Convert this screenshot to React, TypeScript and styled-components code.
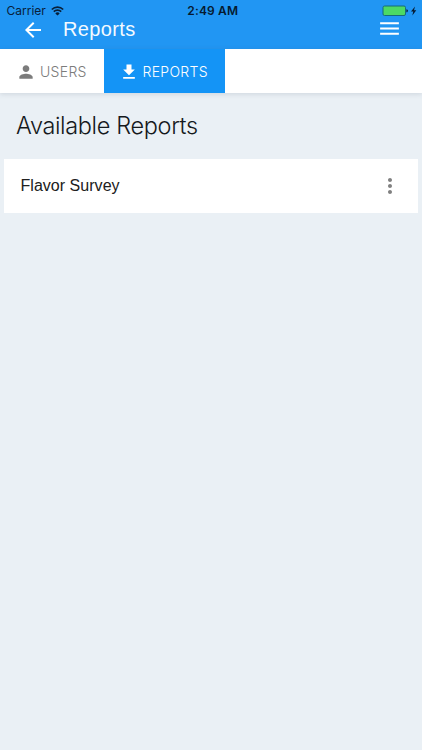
import React from "react";
import styled, { createGlobalStyle } from "styled-components";

const GlobalStyle = createGlobalStyle`
  * { box-sizing: border-box; }
  body { margin: 0; background: #eaf0f5; font-family: "Liberation Sans", Arial, sans-serif; }
`;

const Screen = styled.div`
  width: 100%;
  min-height: 100vh;
  background: #eaf0f5;
  overflow: hidden;
`;

const Header = styled.header`
  height: 49px;
  background: #2196f3;
`;

const StatusBar = styled.div`
  height: 18px;
  padding: 4px 5px 0 6.5px;
  display: grid;
  grid-template-columns: 1fr auto 1fr;
  font: 500 12px/14px Inter, sans-serif;
  color: #08203a;
`;

const StatusGroup = styled.div<{ $end?: boolean }>`
  display: flex;
  align-items: center;
  gap: 5px;
  letter-spacing: 0;
  font-weight: 400;
  justify-content: ${(p) => (p.$end ? "flex-end" : "flex-start")};
`;

const Clock = styled.div`
  font-weight: 600;
  letter-spacing: 0.15px;
  color: #061a30;
  margin-left: 2px;
`;

const Toolbar = styled.div`
  display: flex;
  align-items: center;
  height: 24px;
  padding: 0 20px 0 21px;
`;

const IconButton = styled.button<{ $color: string }>`
  display: flex;
  padding: 0;
  border: 0;
  background: none;
  color: ${(p) => p.$color};
`;

const MenuButton = styled(IconButton)`
  margin-bottom: 3px;
`;

const Title = styled.h1`
  flex: 1;
  margin: -2px 0 0 18px;
  font-size: 20px;
  line-height: 24px;
  font-weight: 400;
  letter-spacing: 0.35px;
  color: #f4faff;
`;

const Tabs = styled.nav`
  display: flex;
  height: 44px;
  background: #fff;
  box-shadow: 0 1px 5px rgba(70, 90, 110, 0.18);
`;

const Tab = styled.button<{ $active?: boolean; $width: number }>`
  display: flex;
  align-items: center;
  gap: 4px;
  width: ${(p) => p.$width}px;
  padding: 1px 0 0 ${(p) => (p.$active ? 15 : 16)}px;
  border: 0;
  background: ${(p) => (p.$active ? "#1494f6" : "#fff")};
  color: ${(p) => (p.$active ? "#fff" : "#7c7c7c")};
`;

const TabLabel = styled.span<{ $spacing: number }>`
  font: 300 14px/20px Inter, sans-serif;
  letter-spacing: ${(p) => p.$spacing}px;
  white-space: nowrap;
`;

const Heading = styled.h2`
  margin: 0;
  height: 65.5px;
  padding-left: 16px;
  font: 300 23.5px/66px Inter, sans-serif;
  letter-spacing: -0.35px;
  color: #15191c;
  white-space: nowrap;
`;

const Card = styled.section`
  display: flex;
  align-items: center;
  justify-content: space-between;
  height: 54px;
  margin: 0 4px;
  padding: 0 16px 0 16.5px;
  background: #fff;
`;

const ReportName = styled.span`
  font-size: 16px;
  letter-spacing: 0.03px;
  color: #202020;
`;

const Icon = ({ d, size = 24 }: { d: string; size?: number }) => (
  <svg width={size} height={size} viewBox="0 0 24 24" fill="currentColor" aria-hidden="true">
    <path d={d} />
  </svg>
);

const icons = {
  back: "M20 11H7.83l5.59-5.59L12 4l-8 8 8 8 1.41-1.41L7.83 13H20v-2z",
  menu: "M3 18h18v-2H3v2zm0-5h18v-2H3v2zm0-7v2h18V6H3z",
  person: "M12 12c2.21 0 4-1.79 4-4s-1.79-4-4-4-4 1.79-4 4 1.79 4 4 4zm0 2c-2.67 0-8 1.34-8 4v2h16v-2c0-2.66-5.33-4-8-4z",
  download: "M19 9h-4V3H9v6H5l7 7 7-7zM5 18v2h14v-2H5z",
  more: "M12 8c1.1 0 2-.9 2-2s-.9-2-2-2-2 .9-2 2 .9 2 2 2zm0 2c-1.1 0-2 .9-2 2s.9 2 2 2 2-.9 2-2-.9-2-2-2zm0 6c-1.1 0-2 .9-2 2s.9 2 2 2 2-.9 2-2-.9-2-2-2z",
};

const Wifi = () => (
  <svg width="13" height="10" viewBox="0 0 13 10" fill="none" stroke="currentColor" strokeWidth="1.7">
    <path d="M.8 3.5a8.1 8.1 0 0 1 11.4 0M2.8 5.6a5.2 5.2 0 0 1 7.4 0" />
    <path d="M6.5 9.6 4.3 7.4a3.1 3.1 0 0 1 4.4 0z" fill="currentColor" stroke="none" />
  </svg>
);

const Battery = () => (
  <svg width="35" height="12" viewBox="0 0 35 12">
    <rect x="1" y="1" width="22.5" height="9.5" rx="1.5" fill="#4cd964" stroke="#176b79" />
    <path d="M24.4 4.2c2 .3 2 2.8 0 3.1z" fill="#08203a" />
    <path d="M33 1.5 29 6.4h2.3l-1 4 4-5.2H32z" fill="#061a30" />
  </svg>
);

export default function App() {
  return (
    <>
      <GlobalStyle />
      <Screen>
        <Header>
          <StatusBar>
            <StatusGroup>Carrier <Wifi /></StatusGroup>
            <Clock>2:49 AM</Clock>
            <StatusGroup $end><Battery /></StatusGroup>
          </StatusBar>
          <Toolbar>
            <IconButton $color="#fff" aria-label="Back"><Icon d={icons.back} /></IconButton>
            <Title>Reports</Title>
            <MenuButton $color="#fff" aria-label="Menu"><Icon d={icons.menu} size={25} /></MenuButton>
          </Toolbar>
        </Header>
        <Tabs>
          <Tab $width={103.5}>
            <Icon d={icons.person} size={20} />
            <TabLabel $spacing={0.3}>USERS</TabLabel>
          </Tab>
          <Tab $width={121.5} $active>
            <Icon d={icons.download} size={20} />
            <TabLabel $spacing={0.3}>REPORTS</TabLabel>
          </Tab>
        </Tabs>
        <Heading>Available Reports</Heading>
        <Card>
          <ReportName>Flavor Survey</ReportName>
          <IconButton $color="#808080" aria-label="More options"><Icon d={icons.more} /></IconButton>
        </Card>
      </Screen>
    </>
  );
}
